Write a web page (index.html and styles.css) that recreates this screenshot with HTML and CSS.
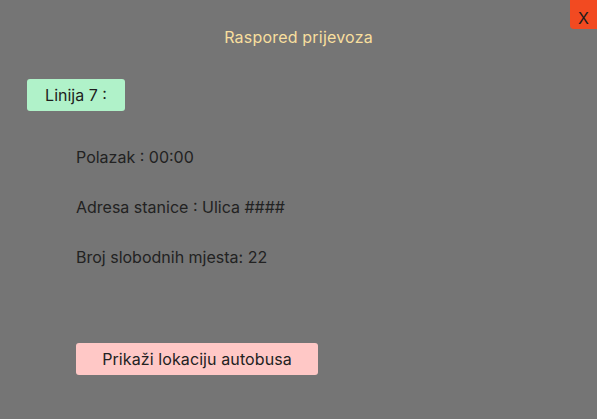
FILE: index.html
```html
<!DOCTYPE html>
<html lang="hr">
<head>
<meta charset="utf-8">
<title>Raspored prijevoza</title>
<link rel="stylesheet" href="styles.css">
</head>
<body>
<div class="page">
  <button class="close">X</button>
  <h1 class="title">Raspored prijevoza</h1>
  <div class="badge">Linija 7 :</div>
  <div class="details">
    <p class="row">Polazak : 00:00</p>
    <p class="row">Adresa stanice : Ulica ####</p>
    <p class="row">Broj slobodnih mjesta: 22</p>
  </div>
  <button class="action">Prikaži lokaciju autobusa</button>
</div>
</body>
</html>
```
FILE: styles.css
```css
html, body {
  margin: 0;
  padding: 0;
  background: #757575;
}
body {
  font-family: Inter, "Noto Sans", sans-serif;
  color: #222222;
  width: 597px;
  height: 419px;
  overflow: hidden;
}
.page {
  position: relative;
  display: flex;
  flex-direction: column;
  align-items: flex-start;
  height: 419px;
}
.close {
  position: absolute;
  top: 0;
  right: 0;
  width: 27px;
  height: 29px;
  border: none;
  padding: 0;
  background: #f24a21;
  border-bottom-left-radius: 4px;
  color: #1c1c1c;
  font-family: Inter, sans-serif;
  font-size: 16px;
  display: flex;
  align-items: center;
  justify-content: center;
  padding-top: 6px;
}
.title {
  align-self: stretch;
  margin: 0;
  padding-top: 27px;
  text-align: center;
  font-size: 16px;
  letter-spacing: 0.2px;
  line-height: 20px;
  font-weight: 400;
  color: #f8df9e;
}
.badge {
  margin: 32px 0 0 27px;
  width: 98px;
  height: 32px;
  border-radius: 3px;
  background: #b0f2c9;
  display: flex;
  align-items: center;
  justify-content: center;
  font-size: 16px;
  color: #1e1e1e;
}
.details {
  margin: 36px 0 0 76px;
  display: flex;
  flex-direction: column;
  gap: 30px;
}
.row {
  margin: 0;
  font-size: 16px;
  line-height: 20px;
  color: #222222;
}
.action {
  margin: 76px 0 0 76px;
  width: 242px;
  height: 32px;
  border: none;
  border-radius: 3px;
  background: #ffc8c6;
  font-family: Inter, sans-serif;
  font-size: 16px;
  letter-spacing: 0.1px;
  color: #222222;
  padding: 0;
}
```
